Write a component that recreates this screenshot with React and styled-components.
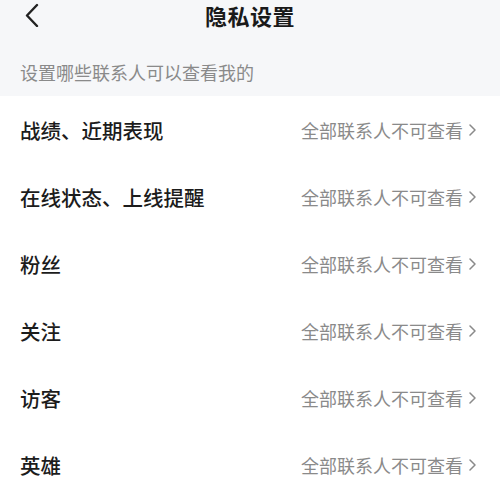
import React from 'react'
import styled, { createGlobalStyle } from 'styled-components'

const Global = createGlobalStyle`
  html, body {
    margin: 0;
    padding: 0;
    background: #ffffff;
  }
  body {
    font-family: "Noto Sans CJK SC", "Noto Sans", sans-serif;
  }
`;

const Page = styled.div`
  width: 500px;
  height: 490px;
  overflow: hidden;
  display: flex;
  flex-direction: column;
`;

const Header = styled.div`
  background: #f6f7f9;
  display: flex;
  flex-direction: column;
`;

const NavBar = styled.div`
  height: 30px;
  display: grid;
  grid-template-columns: 60px 1fr 60px;
  align-items: center;
`;

const Back = styled.div`
  display: flex;
  align-items: center;
  padding-left: 24px;
  height: 28px;
`;

const Title = styled.h1`
  margin: 0;
  text-align: center;
  font-size: 22px;
  font-weight: 700;
  color: #1a1a1a;
  line-height: 30px;
  letter-spacing: 0.5px;
`;

const Hint = styled.div`
  padding: 30px 20px 12px;
  font-size: 18px;
  line-height: 24px;
  color: #8a8a8a;
`;

const List = styled.ul`
  margin: 0;
  padding: 0;
  list-style: none;
  background: #ffffff;
`;

const Row = styled.li`
  height: 67px;
  display: flex;
  align-items: center;
  justify-content: space-between;
  padding: 0 24px 0 20px;
`;

const Label = styled.span`
  font-size: 20.5px;
  color: #1c1c1c;
  font-weight: 500;
`;

const Value = styled.span`
  display: flex;
  align-items: center;
  gap: 6px;
  font-size: 18px;
  color: #8a8a8a;
`;

const rows = [
  '战绩、近期表现',
  '在线状态、上线提醒',
  '粉丝',
  '关注',
  '访客',
  '英雄',
]

export default function App() {
  return (
    <Page>
      <Global />
      <Header>
        <NavBar>
          <Back>
            <svg width="16" height="24" viewBox="0 0 16 24">
              <path d="M13 2 L3 12.5 L13 23" fill="none" stroke="#222" strokeWidth="2.4" strokeLinecap="round" strokeLinejoin="round" />
            </svg>
          </Back>
          <Title>隐私设置</Title>
          <div />
        </NavBar>
        <Hint>设置哪些联系人可以查看我的</Hint>
      </Header>
      <List>
        {rows.map(r => (
          <Row key={r}>
            <Label>{r}</Label>
            <Value>
              全部联系人不可查看
              <svg width="7" height="12" viewBox="0 0 7 12">
                <path d="M1 1 L6 6 L1 11" fill="none" stroke="#8a8a8a" strokeWidth="1.5" strokeLinecap="round" strokeLinejoin="round" />
              </svg>
            </Value>
          </Row>
        ))}
      </List>
    </Page>
  )
}
